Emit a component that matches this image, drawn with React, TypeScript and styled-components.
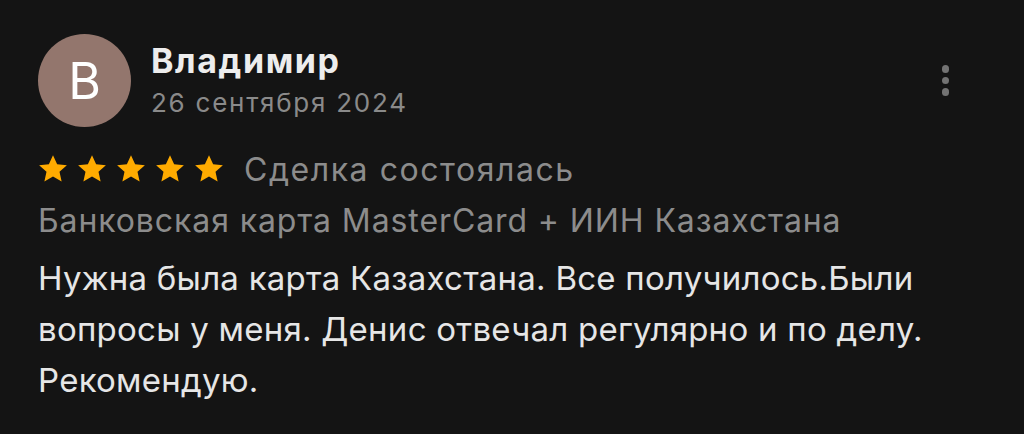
import React from "react";
import styled, { createGlobalStyle } from "styled-components";

const Global = createGlobalStyle`
  html, body { margin: 0; padding: 0; background: #141414; }
  body { font-family: Inter, "Noto Sans", sans-serif; -webkit-font-smoothing: antialiased; }
`;

const Card = styled.div`
  width: 1024px;
  height: 434px;
  box-sizing: border-box;
  background: #141414;
  padding: 34px 38px 0 38px;
  display: flex;
  flex-direction: column;
`;

const Header = styled.div`
  display: flex;
  align-items: center;
  gap: 20px;
`;

const Avatar = styled.div`
  width: 93px;
  height: 93px;
  border-radius: 50%;
  background: #93766d;
  color: #fff;
  display: flex;
  align-items: center;
  justify-content: center;
  font-size: 50px;
  font-weight: 400;
  flex-shrink: 0;
`;

const Meta = styled.div`
  display: flex;
  flex-direction: column;
  flex: 1;
`;

const Name = styled.div`
  color: #ededed;
  font-size: 34px;
  font-weight: 700;
  line-height: 40px;
  letter-spacing: 1.6px;
`;

const DateText = styled.div`
  color: #8a8a8a;
  font-size: 26px;
  line-height: 34px;
  margin-top: 5px;
  letter-spacing: 1.75px;
`;

const MoreButton = styled.div`
  display: flex;
  flex-direction: column;
  gap: 4px;
  margin-right: 37px;
`;

const Dot = styled.span`
  width: 7.5px;
  height: 7.5px;
  border-radius: 50%;
  background: #737373;
`;

const RatingRow = styled.div`
  display: flex;
  align-items: center;
  margin-top: 23px;
  height: 40px;
`;

const Stars = styled.div`
  display: flex;
  gap: 9px;
  margin-right: 20px;
  margin-top: -4px;
`;

const Status = styled.span`
  color: #8c8c8c;
  font-size: 32px;
  line-height: 40px;
  letter-spacing: 1.55px;
`;

const Subtitle = styled.div`
  color: #8c8c8c;
  font-size: 32px;
  line-height: 40px;
  margin-top: 11px;
  letter-spacing: 0.9px;
`;

const Body = styled.div`
  color: #e6e6e6;
  font-size: 33px;
  line-height: 51px;
  margin-top: 12px;
  max-width: 940px;
  letter-spacing: 0.25px;
`;

const Star = () => (
  <svg width="30" height="29" viewBox="0 0 24 23">
    <path
      d="M12 0.8l3.3 7.2 7.8 0.8-5.9 5.3 1.7 7.8L12 17.9l-6.9 4 1.7-7.8L0.9 8.8l7.8-0.8z"
      fill="#ffab00"
    />
  </svg>
);

export default function App() {
  return (
    <>
      <Global />
      <Card>
        <Header>
          <Avatar>В</Avatar>
          <Meta>
            <Name>Владимир</Name>
            <DateText>26 сентября 2024</DateText>
          </Meta>
          <MoreButton>
            <Dot />
            <Dot />
            <Dot />
          </MoreButton>
        </Header>
        <RatingRow>
          <Stars>
            {[0, 1, 2, 3, 4].map((i) => (
              <Star key={i} />
            ))}
          </Stars>
          <Status>Сделка состоялась</Status>
        </RatingRow>
        <Subtitle>Банковская карта MasterCard + ИИН Казахстана</Subtitle>
        <Body>
          Нужна была карта Казахстана. Все получилось.Были вопросы у меня. Денис отвечал регулярно и по делу. Рекомендую.
        </Body>
      </Card>
    </>
  );
}
